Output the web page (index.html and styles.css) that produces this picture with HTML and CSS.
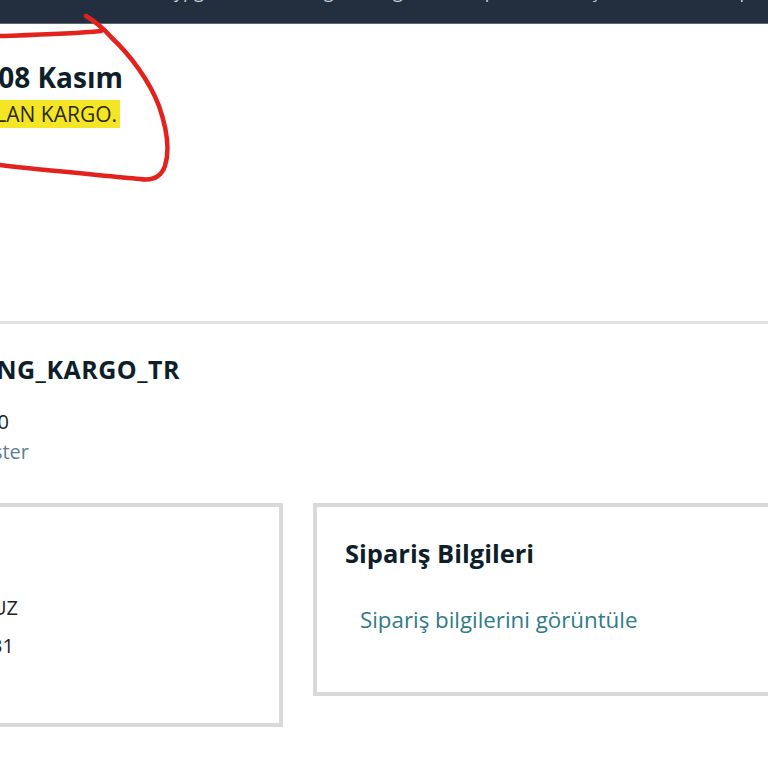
FILE: index.html
```html
<!DOCTYPE html>
<html lang="tr">
<head>
<meta charset="utf-8">
<title>Sipariş Takibi</title>
<link rel="stylesheet" href="styles.css">
</head>
<body>
<header class="nav">
  <div class="nav-text">
    <span>Teslimat: Ankara ypg</span>
    <span>Tüm Kategoriler ağ</span>
    <span>Hesap ve Listeler ç</span>
    <span>İadeler ve Siparişler</span>
    <span>Sepet ypy</span>
  </div>
</header>

<main class="page">
  <section class="status">
    <div class="cut title-cut"><h1 class="status-title">Teslim tarihi: 08 Kasım</h1></div>
    <div class="cut sub-cut"><p class="status-sub"><span class="marker">PAKETİNİZİ TESLİM ALAN KARGO.</span></p></div>
  </section>

  <section class="carrier">
    <div class="cut carrier-cut"><h2 class="carrier-name">Taşıyan: AMZN_TR_STANDARD_SHIPPING_KARGO_TR</h2></div>
    <div class="cut track-cut"><p class="carrier-line">Takip numarası: TR1234567890</p></div>
    <div class="cut link-cut"><a class="muted-link" href="#">Tüm güncellemeleri göster</a></div>
  </section>

  <section class="cards">
    <div class="card card-left">
      <div class="cut uz-cut"><p class="card-line">Teslimat Adresi: MEHMET YILDIZ ÖZ YAVUZ</p></div>
      <div class="cut one-cut"><p class="card-line">0532 000 00 31</p></div>
    </div>
    <div class="card card-right">
      <h3 class="card-title">Sipariş Bilgileri</h3>
      <a class="card-link" href="#">Sipariş bilgilerini görüntüle</a>
    </div>
  </section>
</main>

<svg class="scribble" width="200" height="200" viewBox="0 0 200 200" aria-hidden="true">
  <path d="M0,36 C30,35 70,34 101,31" />
  <path d="M86,16 C96,22 104,29 112,38 C130,55 149,80 159,106 C167,129 170,150 165,166 C161,177 152,181 140,179 C100,175 40,170 0,165" />
</svg>
</body>
</html>
```

FILE: styles.css
```css
* { box-sizing: border-box; }

html, body {
  margin: 0;
  padding: 0;
  background: #ffffff;
  overflow: hidden;
}

body {
  font-family: "Open Sans", "Noto Sans", sans-serif;
  color: #0f1111;
  width: 768px;
  height: 768px;
  position: relative;
}

.nav {
  height: 24px;
  background: #232f3e;
  border-bottom: 1px solid #5d6773;
  overflow: hidden;
}

.nav-text {
  display: flex;
  gap: 40px;
  margin-top: -21px;
  margin-left: 30px;
  font-size: 18px;
  line-height: 24px;
  color: #c9ced4;
  white-space: nowrap;
}

.page {
  display: flex;
  flex-direction: column;
}

.cut {
  display: flex;
  justify-content: flex-end;
  white-space: nowrap;
}

.status {
  padding-top: 36px;
  height: 297px;
}

.title-cut { width: 123px; }

.status-title {
  margin: 0;
  font-size: 28px;
  line-height: 34px;
  font-weight: 700;
  color: #0f1f2a;
}

.sub-cut { width: 120px; margin-top: 3px; }

.status-sub {
  margin: 0;
  font-size: 21px;
  line-height: 34px;
  color: #2b2a10;
}

.marker {
  background: #f5e625;
  padding-right: 3px;
}

.carrier {
  border-top: 3px solid #e1e3e3;
  padding-top: 30px;
  height: 182px;
}

.carrier-cut { width: 180px; }

.carrier-name {
  margin: 0;
  font-size: 25px;
  line-height: 30px;
  font-weight: 700;
  color: #0f1f2a;
  letter-spacing: 0.5px;
}

.track-cut { width: 9px; margin-top: 23px; }

.carrier-line {
  margin: 0;
  font-size: 20px;
  line-height: 30px;
  color: #222;
}

.link-cut { width: 29px; }

.muted-link {
  font-size: 20px;
  line-height: 30px;
  color: #5f7e96;
  text-decoration: none;
}

.cards {
  display: flex;
  align-items: flex-start;
  gap: 30px;
  margin-left: -20px;
}

.card {
  border: 4px solid #d8dada;
  background: #fff;
  flex: none;
}

.card-left {
  width: 303px;
  padding: 86px 0 62px 0;
}

.uz-cut { width: 34px; }
.one-cut { width: 30px; margin-top: 8px; }

.card-line {
  margin: 0;
  font-size: 20px;
  line-height: 30px;
  color: #222;
}

.card-right {
  width: 520px;
  padding: 31px 28px 57px 28px;
}

.card-title {
  margin: 0;
  font-size: 25.5px;
  line-height: 30px;
  font-weight: 700;
  color: #0f1f2a;
}

.card-link {
  display: block;
  margin: 37px 0 0 15px;
  font-size: 22.3px;
  line-height: 30px;
  color: #2f7b88;
  text-decoration: none;
}

.scribble {
  position: absolute;
  left: 0;
  top: 0;
  fill: none;
  stroke: #e3221d;
  stroke-width: 4.5;
  stroke-linecap: round;
  stroke-linejoin: round;
}
```
